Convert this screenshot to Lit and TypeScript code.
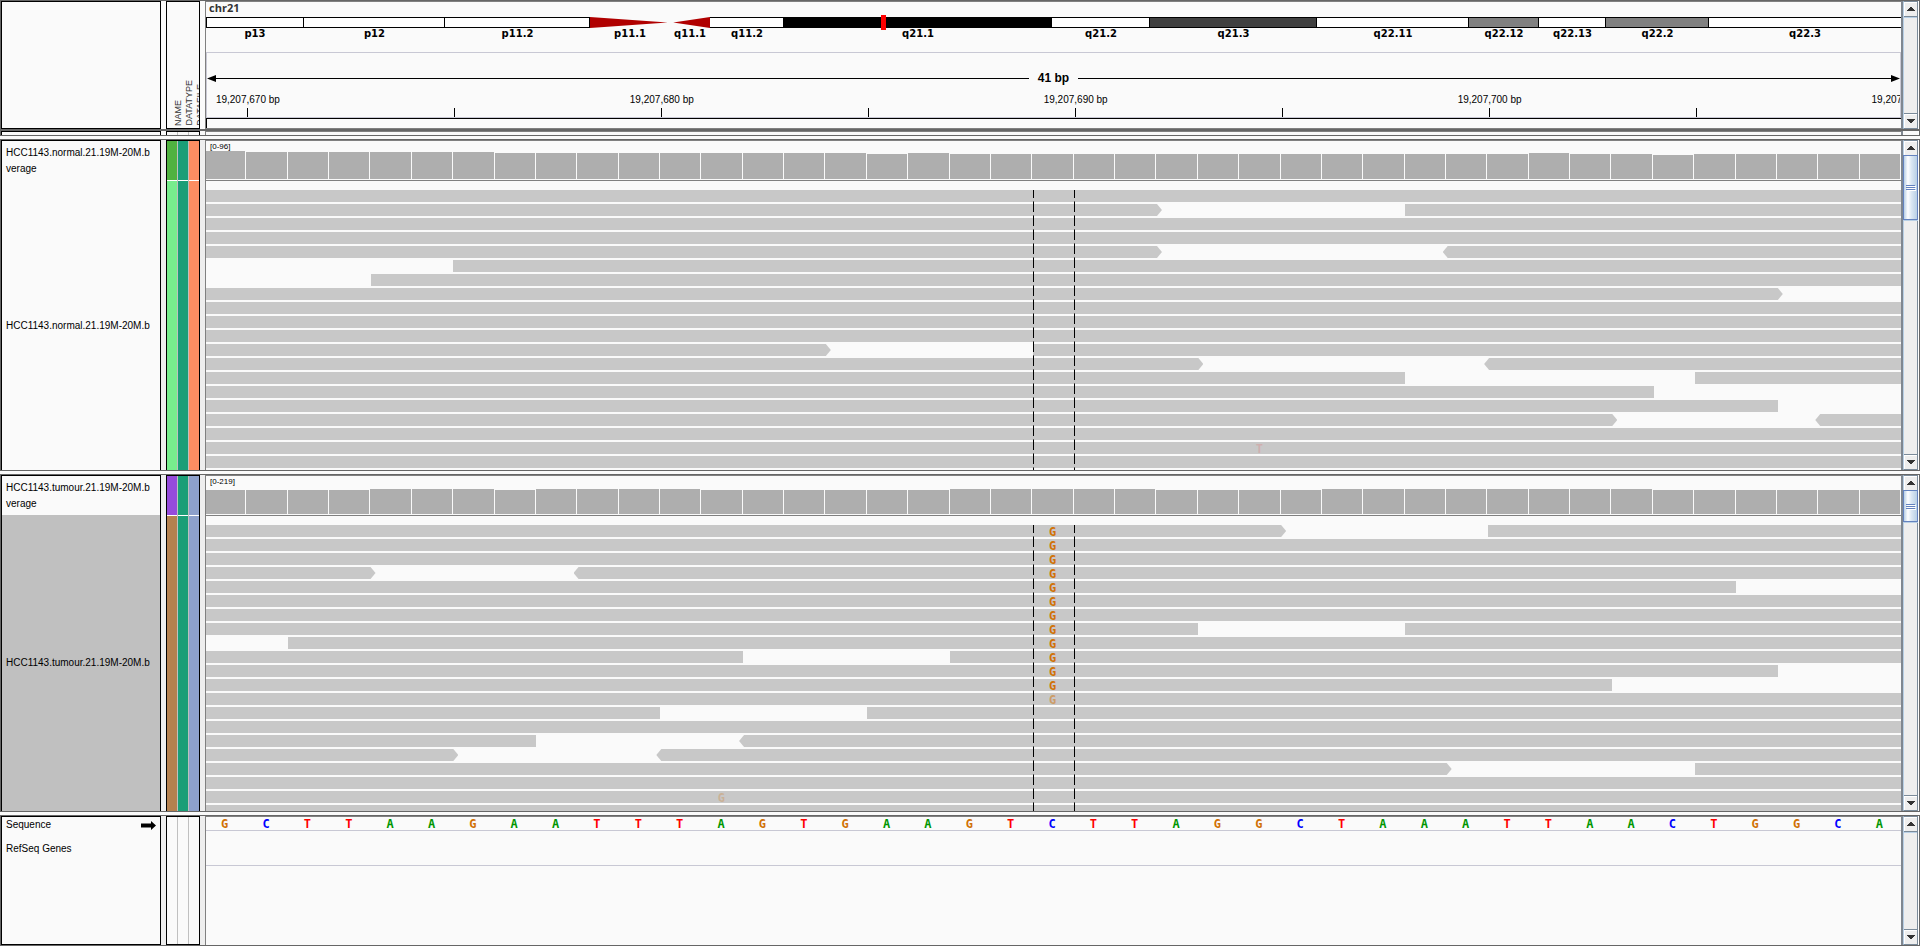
import { LitElement, html, css, nothing } from "lit";
import { customElement, property } from "lit/decorators.js";
import { classMap } from "lit/directives/class-map.js";
import { styleMap } from "lit/directives/style-map.js";

const SPAN = 41;

interface Band { name: string; size: number; stain: string; }
interface Read { from: number; to: number; left?: boolean; right?: boolean; }
interface Mismatch { row: number; at: number; base: string; quality: string; }
interface Sample {
  name: string;
  range: string;
  coverage: number[];
  rows: Read[][];
  mismatches: Mismatch[];
  selected: boolean;
  colors: { coverage: string[]; reads: string[] };
  thumb: number;
}

const BANDS: Band[] = [
  { name: "p13", size: 98, stain: "neg" },
  { name: "p12", size: 141, stain: "neg" },
  { name: "p11.2", size: 145, stain: "neg" },
  { name: "p11.1", size: 80, stain: "cen-p" },
  { name: "q11.1", size: 40, stain: "cen-q" },
  { name: "q11.2", size: 74, stain: "neg" },
  { name: "q21.1", size: 268, stain: "pos100" },
  { name: "q21.2", size: 98, stain: "neg" },
  { name: "q21.3", size: 167, stain: "pos75" },
  { name: "q22.11", size: 152, stain: "neg" },
  { name: "q22.12", size: 70, stain: "pos50" },
  { name: "q22.13", size: 67, stain: "neg" },
  { name: "q22.2", size: 103, stain: "pos50" },
  { name: "q22.3", size: 192, stain: "neg" },
];

const SEQUENCE = "GCTTAAGAATTTAGTGAAGTCTTAGGCTAAATTAACTGGCA";

const full = (): Read[] => [{ from: 0, to: SPAN }];
const gap = (a: number, b: number, right = false, left = false): Read[] => {
  const reads: Read[] = [];
  if (a > 0) reads.push({ from: 0, to: a, right });
  if (b < SPAN) reads.push({ from: b, to: SPAN, left });
  return reads;
};
const fill = (n: number, v: number): number[] => Array<number>(n).fill(v);

const NORMAL: Sample = {
  name: "HCC1143.normal.21.19M-20M.b",
  range: "[0-96]",
  coverage: [28, ...fill(6, 27), ...fill(9, 26), 25, 26, ...fill(14, 25), 26, 25, 25, 24, ...fill(5, 25)],
  rows: [
    full(), gap(23, 29, true), full(), full(), gap(23, 30, true, true),
    gap(0, 6), gap(0, 4), gap(38, 41, true), full(), full(),
    full(), gap(15, 20, true), gap(24, 31, true, true), gap(29, 36), gap(35, 41),
    gap(38, 41), gap(34, 39, true, true), full(), full(), full(),
  ],
  mismatches: [{ row: 18, at: 25, base: "T", quality: "q-none" }],
  selected: false,
  colors: { coverage: ["#50b240", "#1b9e77", "#fc8d62"], reads: ["#77ed8d", "#1b9e77", "#fc8d62"] },
  thumb: 65,
};

const TUMOUR: Sample = {
  name: "HCC1143.tumour.21.19M-20M.b",
  range: "[0-219]",
  coverage: [...fill(4, 24), ...fill(3, 25), 24, ...fill(4, 25), ...fill(6, 24), ...fill(5, 25), ...fill(4, 24), ...fill(8, 25), ...fill(6, 24)],
  rows: [
    gap(26, 31, true), full(), full(), gap(4, 9, true, true), gap(37, 41),
    full(), full(), gap(24, 29), gap(0, 2), gap(13, 18),
    gap(38, 41), gap(34, 41), full(), gap(11, 16), full(),
    gap(8, 13, false, true), gap(6, 11, true, true), gap(30, 36, true), full(), full(), full(),
  ],
  mismatches: [
    ...Array.from({ length: 13 }, (_, row) => ({ row, at: 20, base: "G", quality: row === 12 ? "q-mid" : "q-high" })),
    { row: 19, at: 12, base: "G", quality: "q-low" },
  ],
  selected: true,
  colors: { coverage: ["#954bdb", "#1b9e77", "#8da0cb"], reads: ["#b4814f", "#1b9e77", "#8da0cb"] },
  thumb: 32,
};

@customElement("scroll-bar")
export class ScrollBar extends LitElement {
  @property({ type: Number }) thumb = 0;

  static styles = css`
    :host {
      display: flex;
      flex-direction: column;
      box-sizing: border-box;
      min-height: 0;
      overflow: hidden;
      border-left: 2px solid #7f8790;
      border-right: 1px solid #ffffff;
      background: #eeeeee;
    }
    .rail {
      display: flex;
      flex-direction: column;
      flex: 1;
      min-height: 0;
      border: 1px solid #7a8a99;
      border-left-color: #b8cfe5;
    }
    button {
      flex: none;
      display: flex;
      align-items: center;
      justify-content: center;
      height: 15px;
      padding: 0;
      border: 0;
      background: #eeeeee;
      box-shadow: inset 1px 1px #ffffff;
    }
    .up { border-bottom: 1px solid #7a8a99; }
    .down { border-top: 1px solid #7a8a99; }
    .track { flex: 1; min-height: 0; border-top: 1px solid #b8cfe5; }
    .loaded { border-top: 0; }
    .thumb {
      box-sizing: border-box;
      display: flex;
      flex-direction: column;
      align-items: center;
      justify-content: center;
      gap: 1px;
      margin: -1px -1px 0;
      border: 1px solid #6382bf;
      background: linear-gradient(90deg, #b8cfe5, #ffffff 30%, #dce8f4 55%, #b8cfe5);
      box-shadow: 0 1px #b8cfe5;
    }
    .grip { width: 9px; height: 1px; background: #6382bf; box-shadow: 1px 1px #ffffff; }
  `;

  render() {
    return html`
      <div class="rail">
        <button class="up" aria-label="Scroll up">
          <svg width="8" height="4" shape-rendering="crispEdges"><path d="M3 0h2v1h1v1h1v1h1v1H0V3h1V2h1V1h1z" fill="#333" /></svg>
        </button>
        <div class=${classMap({ track: true, loaded: this.thumb > 0 })}>
          ${this.thumb
            ? html`<div class="thumb" style=${styleMap({ height: `${this.thumb}px` })}>
                <span class="grip"></span><span class="grip"></span><span class="grip"></span>
              </div>`
            : nothing}
        </div>
        <button class="down" aria-label="Scroll down">
          <svg width="8" height="4" shape-rendering="crispEdges"><path d="M0 0h8v1H7v1H6v1H5v1H3V3H2V2H1V1H0z" fill="#333" /></svg>
        </button>
      </div>
    `;
  }
}

@customElement("app-root")
export class AppRoot extends LitElement {
  static styles = css`
    :host {
      display: block;
      color: #000000;
      background: #fafafa;
      font: 10px/16px "Liberation Sans", Arial, sans-serif;
    }
    .page {
      display: grid;
      grid-template-rows: auto minmax(0, 332fr) minmax(0, 338fr) minmax(0, 131fr);
      gap: 3px;
      height: 100vh;
    }
    .panel {
      display: grid;
      grid-template-columns: 160px 34px minmax(0, 1fr) 18px;
      grid-template-rows: minmax(0, 1fr);
      min-height: 0;
      overflow: hidden;
      border: 1px solid #666666;
      background: #eeeeee;
    }
    .names, .attributes {
      box-sizing: border-box;
      min-height: 0;
      border: 1px solid #000000;
      background: #fafafa;
      overflow: hidden;
    }
    .names { display: flex; flex-direction: column; }
    .attributes { display: flex; margin: 0 -5px 0 5px; }
    .data {
      box-sizing: border-box;
      display: flex;
      flex-direction: column;
      margin-left: 10px;
      min-height: 0;
      overflow: hidden;
      border-top: 1px solid #808080;
      border-left: 1px solid #808080;
      background: #fafafa;
    }
    .sample .names, .sample .attributes { border-bottom: 0; }
    .grid {
      display: grid;
      grid-template-columns: repeat(41, minmax(0, 1fr));
      grid-auto-columns: 0;
    }

    /* genome header */
    .header { background: #fafafa; border-bottom: 0; }
    .header .data { border-bottom: 1px solid #808080; }
    .strip { height: 4px; border-top-width: 2px; background: #fafafa; }
    .strip .names, .strip .attributes { border-bottom: 0; }
    .strip .rail { border-left: 2px solid #7f8790; border-right: 1px solid #ffffff; }
    .attributes.titles { flex-direction: row; align-items: flex-end; padding: 0 0 2px 6px; }
    .title {
      flex: none;
      width: 11px;
      font-size: 9px;
      line-height: 11px;
      color: #333333;
      writing-mode: vertical-rl;
      transform: rotate(180deg);
      white-space: nowrap;
    }
    .chromosome {
      padding-left: 3px;
      height: 15px;
      font: bold 11px/11px "Open Sans", sans-serif;
      color: #333333;
    }
    .ideogram { position: relative; display: flex; height: 35px; }
    .band { flex-basis: 0; min-width: 0; text-align: center; font: bold 10px/12px "DejaVu Sans", sans-serif; }
    .stain {
      box-sizing: border-box;
      height: 11px;
      border: solid #000000;
      border-width: 1px 1px 1px 0;
      background: #ffffff;
    }
    .band:first-child .stain { border-left-width: 1px; }
    .band:nth-child(14) .stain { border-right-width: 0; }
    .pos50 { background: #808080; }
    .pos75 { background: #404040; }
    .pos100 { background: #000000; }
    .cen-p, .cen-q { border: 0; background: #b00000; }
    .cen-p { clip-path: polygon(0 0, 97% 50%, 0 100%); }
    .cen-q { clip-path: polygon(8% 50%, 100% 0, 100% 100%); }
    .locus {
      position: absolute;
      top: -2px;
      left: 39.82%;
      width: 5px;
      height: 15px;
      background: #ff0000;
    }
    .ruler { border: 1px solid #c8c8d4; overflow: hidden; }
    .span { display: flex; align-items: center; padding-top: 17px; height: 16px; font-weight: bold; font-size: 12px; }
    .span-line { flex: 1; height: 1px; background: #000000; }
    .span-text { padding: 0 9px; }
    .head { display: block; }
    .ticks { margin: 0 -3px 0 -1px; padding-top: 8px; }
    .tick { grid-row: 1; display: flex; flex-direction: column; align-items: center; gap: 2px; width: 1px; }
    .tick-label { height: 12px; line-height: 12px; white-space: nowrap; }
    .tick-mark { width: 1px; height: 9px; background: #000000; }
    .roi { box-sizing: border-box; height: 10px; border: solid #000000; border-width: 1px 0 0 1px; }

    /* attribute colours */
    .column { flex: 1; display: flex; flex-direction: column; }
    .column + .column { border-left: 1px solid #c0c0c0; }
    .swatch-coverage { height: 39px; border-bottom: 1px solid #ffffff; }
    .swatch-reads { flex: 1; }

    /* samples */
    .name-coverage { box-sizing: border-box; height: 40px; padding: 4px 0 0 4px; white-space: nowrap; }
    .name-reads { flex: 1; display: flex; align-items: center; padding-left: 4px; white-space: nowrap; }
    .selected { margin-top: -1px; background: #c0c0c0; }
    .coverage {
      flex: none;
      box-sizing: border-box;
      align-items: end;
      height: 40px;
      margin-left: -1px;
      padding-bottom: 1px;
      border-bottom: 1px solid #808080;
    }
    .bar { grid-row: 1; margin-right: 1px; background: #aeaeae; }
    .range {
      grid-row: 1;
      grid-column: 1 / span 2;
      align-self: start;
      z-index: 1;
      padding: 1px 0 0 5px;
      font-size: 8px;
      line-height: 10px;
      white-space: nowrap;
    }
    .reads {
      position: relative;
      flex: 1;
      min-height: 0;
      display: flex;
      flex-direction: column;
      gap: 2px;
      margin: 9px -1px 0 -1px;
    }
    .row { flex: none; grid-template-rows: 12px; }
    .read { grid-row: 1; background: #c8c8c8; }
    .right { margin-right: -5px; clip-path: polygon(0 0, calc(100% - 5px) 0, 100% 50%, calc(100% - 5px) 100%, 0 100%); }
    .left { margin-left: -4px; clip-path: polygon(5px 0, 100% 0, 100% 100%, 5px 100%, 0 50%); }
    .base {
      grid-row: 1;
      z-index: 1;
      padding-right: 2px;
      text-align: center;
      font: bold 12px/14px "DejaVu Sans Mono", monospace;
    }
    .A { color: #009600; }
    .C { color: #0000ff; }
    .G { color: #d17105; }
    .T { color: #ff0000; }
    .q-mid { opacity: 0.5; }
    .q-low { opacity: 0.25; }
    .q-none { opacity: 0.12; }
    .center { position: absolute; inset: 0; }
    .guide {
      grid-column: 21;
      margin-right: -1px;
      --dash: repeating-linear-gradient(#000000 0 8px, transparent 8px 11px, #555555 11px 12px, #000000 12px 14px);
      background: var(--dash) left / 1px 100% no-repeat, var(--dash) right / 1px 100% no-repeat;
    }

    /* annotation */
    .name-sequence { display: flex; align-items: center; justify-content: space-between; height: 16px; padding: 0 4px; }
    .name-genes { height: 35px; line-height: 32px; padding-left: 4px; }
    .sequence { height: 13px; margin-left: -1px; border-bottom: 1px solid #c8c8d4; }
    .genes { height: 34px; border-bottom: 1px solid #c8c8d4; }
  `;

  private renderHeader() {
    const ticks = Array.from({ length: 9 }, (_, i) => ({
      column: 2 + i * 5,
      label: i % 2 === 0 ? `19,207,${670 + i * 5} bp` : "",
    }));
    return html`
      <div>
        <section class="panel header" aria-label="Genome position">
          <div class="names"></div>
          <div class="attributes titles">
            <span class="title">NAME</span><span class="title">DATATYPE</span><span class="title">DATAFILE</span>
          </div>
          <div class="data">
            <div class="chromosome">chr21</div>
            <div class="ideogram">
              ${BANDS.map((b) => html`
                <div class="band" style=${styleMap({ flexGrow: `${b.size}` })}>
                  <div class="stain ${b.stain}"></div>
                  ${b.name}
                </div>`)}
              <div class="locus"></div>
            </div>
            <div class="ruler">
              <div class="span">
                <svg class="head" width="9" height="7"><path d="M0 3.5L9 0v7z" /></svg>
                <div class="span-line"></div>
                <span class="span-text">41 bp</span>
                <div class="span-line"></div>
                <svg class="head" width="9" height="7"><path d="M9 3.5L0 0v7z" /></svg>
              </div>
              <div class="grid ticks">
                ${ticks.map((t) => html`
                  <div class="tick" style=${styleMap({ gridColumn: `${t.column}` })}>
                    <span class="tick-label">${t.label}</span>
                    <span class="tick-mark"></span>
                  </div>`)}
              </div>
            </div>
            <div class="roi"></div>
          </div>
          <scroll-bar></scroll-bar>
        </section>
        <div class="panel strip">
          <div class="names"></div>
          <div class="attributes"><div class="column"></div><div class="column"></div><div class="column"></div></div>
          <div class="data"></div>
          <div class="rail"></div>
        </div>
      </div>
    `;
  }

  private renderSample(s: Sample) {
    return html`
      <section class="panel sample" aria-label=${s.name}>
        <div class="names">
          <div class="name-coverage">${s.name}<br />verage</div>
          <div class=${classMap({ "name-reads": true, selected: s.selected })}>${s.name}</div>
        </div>
        <div class="attributes">
          ${s.colors.coverage.map((color, i) => html`
            <div class="column">
              <div class="swatch-coverage" style=${styleMap({ backgroundColor: color })}></div>
              <div class="swatch-reads" style=${styleMap({ backgroundColor: s.colors.reads[i] })}></div>
            </div>`)}
        </div>
        <div class="data">
          <div class="grid coverage">
            <span class="range">${s.range}</span>
            ${s.coverage.map((h, i) => html`
              <div class="bar" style=${styleMap({ gridColumn: `${i + 1}`, height: `${h}px` })}></div>`)}
          </div>
          <div class="reads">
            ${s.rows.map((reads, row) => html`
              <div class="grid row">
                ${reads.map((r) => html`
                  <div
                    class=${classMap({ read: true, left: !!r.left, right: !!r.right })}
                    style=${styleMap({ gridColumn: `${r.from + 1} / ${r.to + 1}` })}
                  ></div>`)}
                ${s.mismatches.filter((m) => m.row === row).map((m) => html`
                  <span class="base ${m.base} ${m.quality}" style=${styleMap({ gridColumn: `${m.at + 1}` })}>${m.base}</span>`)}
              </div>`)}
            <div class="grid center"><div class="guide"></div></div>
          </div>
        </div>
        <scroll-bar .thumb=${s.thumb}></scroll-bar>
      </section>
    `;
  }

  private renderAnnotation() {
    return html`
      <section class="panel" aria-label="Annotation">
        <div class="names">
          <div class="name-sequence">
            Sequence
            <svg width="15" height="9"><path d="M0 2.5h10V0l5 4.5L10 9V6.5H0z" /></svg>
          </div>
          <div class="name-genes">RefSeq Genes</div>
        </div>
        <div class="attributes"><div class="column"></div><div class="column"></div><div class="column"></div></div>
        <div class="data">
          <div class="grid sequence">
            ${[...SEQUENCE].map((base) => html`<span class="base ${base}">${base}</span>`)}
          </div>
          <div class="genes"></div>
        </div>
        <scroll-bar></scroll-bar>
      </section>
    `;
  }

  render() {
    return html`
      <main class="page">
        ${this.renderHeader()} ${this.renderSample(NORMAL)} ${this.renderSample(TUMOUR)} ${this.renderAnnotation()}
      </main>
    `;
  }
}
